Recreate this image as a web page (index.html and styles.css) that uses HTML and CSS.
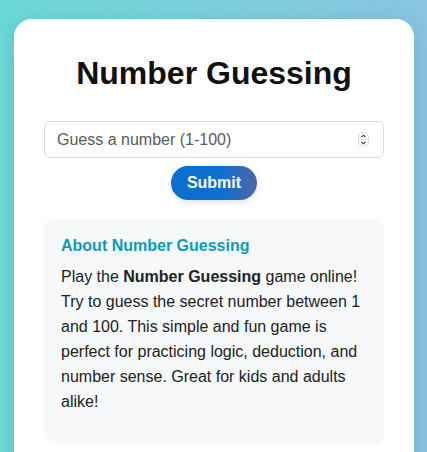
FILE: index.html
```html
<!DOCTYPE html>
<html lang="en">
<head>
<meta charset="utf-8">
<title>Number Guessing</title>
<link rel="stylesheet" href="styles.css">
</head>
<body>
<main class="card">
  <h1 class="title">Number Guessing</h1>
  <div class="field">
    <input class="guess" type="text" placeholder="Guess a number (1-100)">
    <svg class="spin" width="11" height="15" viewBox="0 0 11 15" aria-hidden="true">
      <rect x="0.5" y="0.5" width="10" height="14" rx="5" fill="#fff" stroke="#d6d6d6"/>
      <line x1="1" y1="7.5" x2="10" y2="7.5" stroke="#e2e2e2" stroke-width="1"/>
      <path d="M3.5 5.2 L5.5 3.2 L7.5 5.2" fill="none" stroke="#333" stroke-width="1.1"/>
      <path d="M3.5 9.8 L5.5 11.8 L7.5 9.8" fill="none" stroke="#333" stroke-width="1.1"/>
    </svg>
  </div>
  <div class="actions">
    <button class="submit" type="button">Submit</button>
  </div>
  <section class="about">
    <h2 class="about-title">About Number Guessing</h2>
    <p class="about-text">Play the <strong>Number Guessing</strong> game online! Try to guess the secret number between 1 and 100. This simple and fun game is perfect for practicing logic, deduction, and number sense. Great for kids and adults alike!</p>
  </section>
</main>
</body>
</html>
```

FILE: styles.css
```css
html, body {
  margin: 0;
  padding: 0;
}
body {
  min-height: 100vh;
  background: linear-gradient(90deg, #6bd9d8 0%, #7dd0dd 50%, #8ac5e1 100%);
  font-family: "Liberation Sans", Arial, sans-serif;
  padding: 19px 13px 0 14px;
  box-sizing: border-box;
  overflow: hidden;
}
.card {
  background: #fff;
  border-radius: 18px;
  box-shadow: 0 4px 24px rgba(0, 0, 0, 0.12);
  padding: 36px 30px 30px;
  width: 400px;
  box-sizing: border-box;
  min-height: 520px;
}
.title {
  margin: 0 0 30px;
  font-size: 32px;
  font-weight: bold;
  text-align: center;
  color: #111;
  line-height: 36px;
}
.field {
  display: flex;
  align-items: center;
  height: 37px;
  border: 1px solid #dcdcdc;
  border-radius: 6px;
  box-sizing: border-box;
  padding: 0 14px 0 12px;
  background: #fff;
}
.guess {
  flex: 1;
  border: 0;
  outline: none;
  padding: 0;
  font-family: "Liberation Sans", Arial, sans-serif;
  font-size: 16px;
  color: #222;
  background: transparent;
}
.guess::placeholder {
  color: #5a5a5a;
  opacity: 1;
}
.spin {
  flex: none;
  display: block;
}
.actions {
  display: flex;
  justify-content: center;
  margin-top: 8px;
}
.submit {
  border: 0;
  border-radius: 17px;
  height: 34px;
  padding: 0 16px;
  font-family: "Liberation Sans", Arial, sans-serif;
  font-size: 16px;
  font-weight: bold;
  color: #fff;
  background: linear-gradient(90deg, #0a6fcf 0%, #0a6fcf 55%, #4e67a7 100%);
  box-shadow: 0 2px 6px rgba(0, 60, 140, 0.15);
}
.about {
  margin-top: 19px;
  background: #f6f8fa;
  border-radius: 9px;
  padding: 18px 17px 16px;
}
.about-title {
  margin: 0 0 9px;
  font-size: 16px;
  font-weight: bold;
  color: #0a9bb9;
  line-height: 18px;
}
.about-text {
  margin: 0 0 14px;
  font-size: 16px;
  line-height: 25px;
  color: #222;
}
.about-text strong {
  font-weight: bold;
}
```
